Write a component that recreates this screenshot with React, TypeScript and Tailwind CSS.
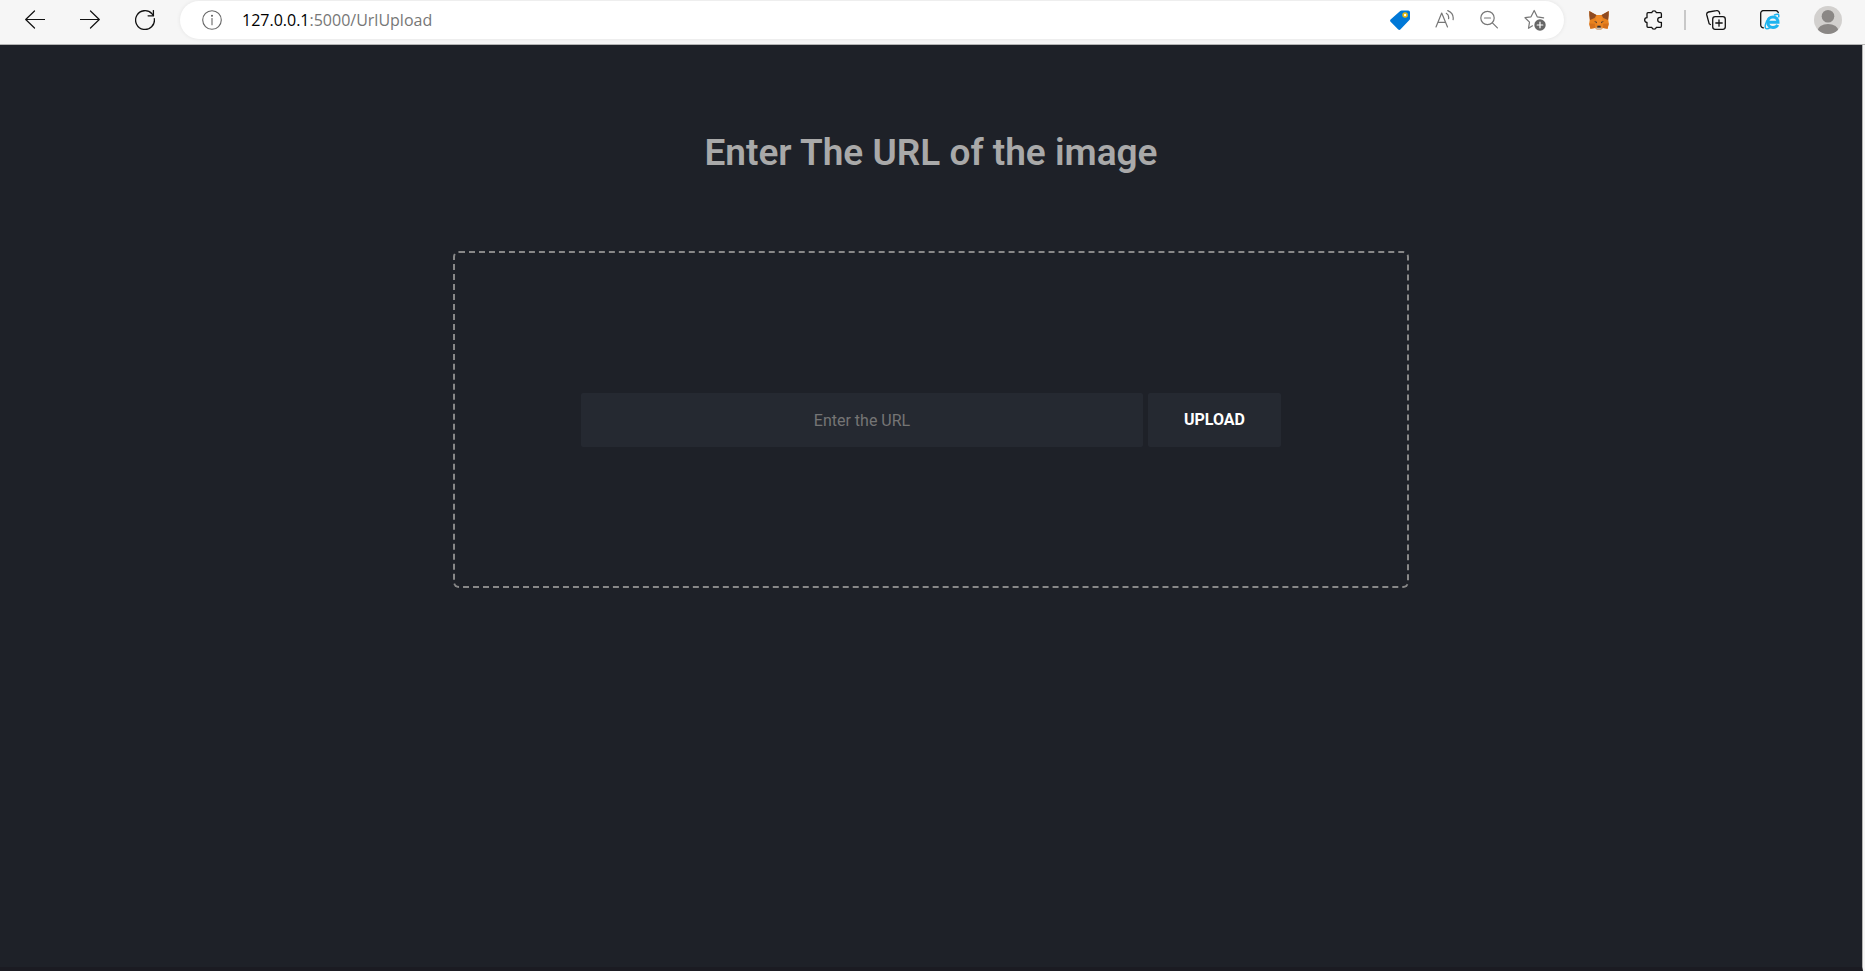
import type { ReactNode } from "react";

function IconButton({ label, children }: { label: string; children: ReactNode }) {
  return (
    <button type="button" aria-label={label} className="flex size-5 shrink-0 items-center justify-center">
      {children}
    </button>
  );
}

const line = {
  width: 20,
  height: 20,
  viewBox: "0 0 20 20",
  fill: "none",
  stroke: "currentColor",
  strokeLinecap: "round" as const,
  strokeLinejoin: "round" as const,
};

function Back() {
  return (
    <svg {...line} strokeWidth="1.2">
      <path d="M9.5 1 .7 9.5l8.8 8.5M.7 9.5h19" />
    </svg>
  );
}

function Forward() {
  return (
    <svg {...line} strokeWidth="1.2">
      <path d="m10.5 1 8.8 8.5-8.8 8.5M19.3 9.500H.3" />
    </svg>
  );
}

function Refresh() {
  return (
    <svg {...line} strokeWidth="1.3">
      <path d="M19.3 8.6A9.4 9.4 0 1 1 17 3.8l1.5 1.8" />
      <path d="M18.4.6v5.2h-5.3" />
    </svg>
  );
}

function Info() {
  return (
    <svg {...line} strokeWidth="1.1" className="text-[#666]">
      <circle cx="10" cy="10" r="9.3" />
      <path d="M10 8.5v6.3" />
      <circle cx="10" cy="5.7" r=".5" fill="currentColor" />
    </svg>
  );
}

function Tag() {
  return (
    <svg {...line} stroke="none">
      <path
        fill="#0078d7"
        d="M11.6.4h6.6A1.8 1.8 0 0 1 20 2.200v6.500a2 2 0 0 1-.6 1.400l-8.800 9.100a1.800 1.800 0 0 1-2.600 0L.6 11.700a1.500 1.500 0 0 1 0-2.100L10.200 1a2 2 0 0 1 1.400-.6z"
      />
      <circle cx="15.100" cy="5" r="2" fill="#fff" stroke="#e8b90c" strokeWidth="1.600" />
    </svg>
  );
}

function ReadAloud() {
  return (
    <svg {...line} strokeWidth="1.2" className="text-[#777]">
      <path d="M1 17 6.700 3 12.500 17M3 12.300h7.500" />
      <path d="M11.300 3.300c1.800 1 2.700 3 2.300 5.300M12.800.6c3.500 1.500 6 4.500 5.300 9" />
    </svg>
  );
}

function ZoomOut() {
  return (
    <svg {...line} strokeWidth="1.2" className="text-[#777]">
      <circle cx="7.500" cy="8" r="6.700" />
      <path d="m12.400 12.900 5 5M4.500 8h6" />
    </svg>
  );
}

function Favorite() {
  return (
    <svg width="22" height="22" viewBox="0 0 22 22" fill="none" stroke="#777" strokeWidth="1.2" strokeLinejoin="round" strokeLinecap="round" className="shrink-0">
      <path d="M8.500 16.800 4.500 19.300l1-6.200L1 8.700l6-.9L10.200 1.500l3 6.300 6.400 1" />
      <circle cx="16" cy="16" r="5.700" fill="#666" stroke="none" />
      <path stroke="#fff" d="M16 13.200v5.600M13.200 16h5.600" />
    </svg>
  );
}

function Fox() {
  return (
    <svg {...line} stroke="none">
      <path fill="#e8821e" d="M.2.900 7.200 5h5.600L19.800.900l-.5 9.100.5 3.500-1.200 5.200-4.600-.7-2 1.700H8l-2-1.700-4.600.7L.2 13.500l.5-3.500z" />
      <path fill="#8f4b22" d="M.3.900 7.500 5.100 5.600 8 1 10 .3 5.200zM19.700.900l-7.200 4.200L14.400 8l4.600 2 .7-4.800z" />
      <path fill="#f08a26" d="M6.500 8.800 8.300 15h3.400l1.800-6.200-1.200-3.500H7.700z" />
      <path fill="#d5701a" d="m.2 13.500 5.600.2L6 18l-4.600.7zM19.800 13.500l-5.600.2-.2 4.300 4.600.7z" />
      <path fill="#2b2b33" d="m5 11.300 2.700.4.300 1.500zM15 11.300l-2.700.4-.3 1.500zM8.500 15.800h3l.4 2H8.100z" />
      <path fill="#c9bdb2" d="m6.500 17.600 2 .2h3l2-.2-1.800 2.100H8.300z" />
    </svg>
  );
}

function Extensions() {
  return (
    <svg {...line} strokeWidth="1.3">
      <path d="M4 2.700h3.800a2.300 2.300 0 0 1 4.500 0h3.900a1.200 1.200 0 0 1 1.200 1.200v3.400h-1.200a2.500 2.500 0 0 0 0 5h1.200v3.800a1.200 1.200 0 0 1-1.200 1.200h-3.900a2.300 2.300 0 0 1-4.500 0H4a1 1 0 0 1-1-1v-3.900a2.300 2.300 0 0 1 0-4.700V3.700a1 1 0 0 1 1-1z" />
    </svg>
  );
}

function Collections() {
  return (
    <svg {...line} strokeWidth="1.3">
      <rect x="6.700" y="6.700" width="12.600" height="12.600" rx="2.500" />
      <path d="M13 9.800v6.400M9.800 13h6.400M4.400 14.500l-1.200-.7L.8 5a2.500 2.500 0 0 1 1.800-3L10.400.700a2.500 2.500 0 0 1 3 1.900l.3 1.300" />
    </svg>
  );
}

function ExplorerMode() {
  return (
    <svg {...line} strokeWidth="1.3">
      <path d="M3.500 17.800A2.800 2.800 0 0 1 .7 15V3.300A2.700 2.700 0 0 1 3.400.600h12.200a2.700 2.700 0 0 1 2.700 2" />
      <path
        stroke="#1eb4ef"
        strokeWidth="3"
        strokeLinecap="butt"
        strokeLinejoin="miter"
        d="M8 12.300h10c0-3.400-2.100-5.300-5-5.300s-5.300 2-5.300 5.300 2.300 5.100 5.300 5.100c2.200 0 3.900-.8 4.700-2.600"
      />
      <path stroke="#1eb4ef" strokeWidth="1.500" d="M14.500 5c3-1.500 4.800-1 4.200 1.800M8.500 8.500C5.700 12 4.400 16.800 5.700 18.300c.8.800 2.800.3 4.700-1" />
    </svg>
  );
}

function Avatar() {
  return (
    <svg width="28" height="28" viewBox="0 0 28 28">
      <clipPath id="disc">
        <circle cx="14" cy="14" r="14" />
      </clipPath>
      <g clipPath="url(#disc)">
        <path fill="#d2d0ce" d="M0 0h28v28H0z" />
        <circle cx="14" cy="10.300" r="6.300" fill="#8a8785" />
        <ellipse cx="14" cy="25" rx="10.500" ry="7" fill="#8a8785" />
      </g>
    </svg>
  );
}

function Toolbar() {
  return (
    <header className="flex h-[45px] items-start border-b border-[#b4b4b4] bg-[#f6f6f6] text-[#111]">
      <nav aria-label="Navigation" className="flex h-10 items-center gap-[35px] px-[25px]">
        <IconButton label="Back"><Back /></IconButton>
        <IconButton label="Forward"><Forward /></IconButton>
        <IconButton label="Refresh"><Refresh /></IconButton>
      </nav>
      <div className="mt-px flex h-[38px] flex-1 items-center rounded-full bg-white pr-[19px] pl-[22px] shadow-[0_0_4px_#00000014]">
        <IconButton label="Site information"><Info /></IconButton>
        <p className="flex-1 pl-5 font-['Open_Sans',sans-serif] text-base leading-6 text-[#777]">
          <span className="text-black">127.0.0.1</span>:5000/UrlUpload
        </p>
        <div className="flex items-center gap-[25px]">
          <IconButton label="Shopping"><Tag /></IconButton>
          <IconButton label="Read aloud"><ReadAloud /></IconButton>
          <IconButton label="Zoom out"><ZoomOut /></IconButton>
          <IconButton label="Add to favorites"><Favorite /></IconButton>
        </div>
      </div>
      <div className="flex h-10 items-center pr-[23px] pl-[25px]">
        <div className="flex items-center gap-[35px]">
          <IconButton label="Wallet"><Fox /></IconButton>
          <IconButton label="Extensions"><Extensions /></IconButton>
        </div>
        <div className="mx-5 h-5 w-0.5 bg-[#c8c8c8]" />
        <div className="flex items-center gap-[34px]">
          <IconButton label="Collections"><Collections /></IconButton>
          <IconButton label="Explorer mode"><ExplorerMode /></IconButton>
          <button type="button" aria-label="Profile" className="shrink-0"><Avatar /></button>
        </div>
      </div>
    </header>
  );
}

export default function App() {
  return (
    <div className="flex min-h-screen flex-col bg-[#f6f6f6]">
      <Toolbar />
      <main className="mr-0.5 flex flex-1 flex-col items-center border-r border-b-4 border-r-[#b4b4b4] border-b-[#1b1b22] bg-[#1e2128] px-6 pt-[84px] font-['Roboto',sans-serif]">
        <h1 className="text-center text-[37px] leading-12 font-semibold text-[#a9a9a9]">Enter The URL of the image</h1>
        <form
          className="mt-[74px] flex w-full max-w-[956px] flex-wrap justify-center gap-[5px] rounded-md border-2 border-dashed border-[#888] px-6 pt-[140px] pb-[139px]"
          onSubmit={(event) => event.preventDefault()}
        >
          <input
            type="url"
            aria-label="Image URL"
            placeholder="Enter the URL"
            className="h-[54px] w-full max-w-[562px] rounded-xs bg-[#252931] text-center text-base text-white outline-none placeholder:text-[#757575]"
          />
          <button type="submit" className="h-[54px] w-[133px] rounded-xs bg-[#252931] text-base font-bold text-white">
            UPLOAD
          </button>
        </form>
      </main>
    </div>
  );
}
